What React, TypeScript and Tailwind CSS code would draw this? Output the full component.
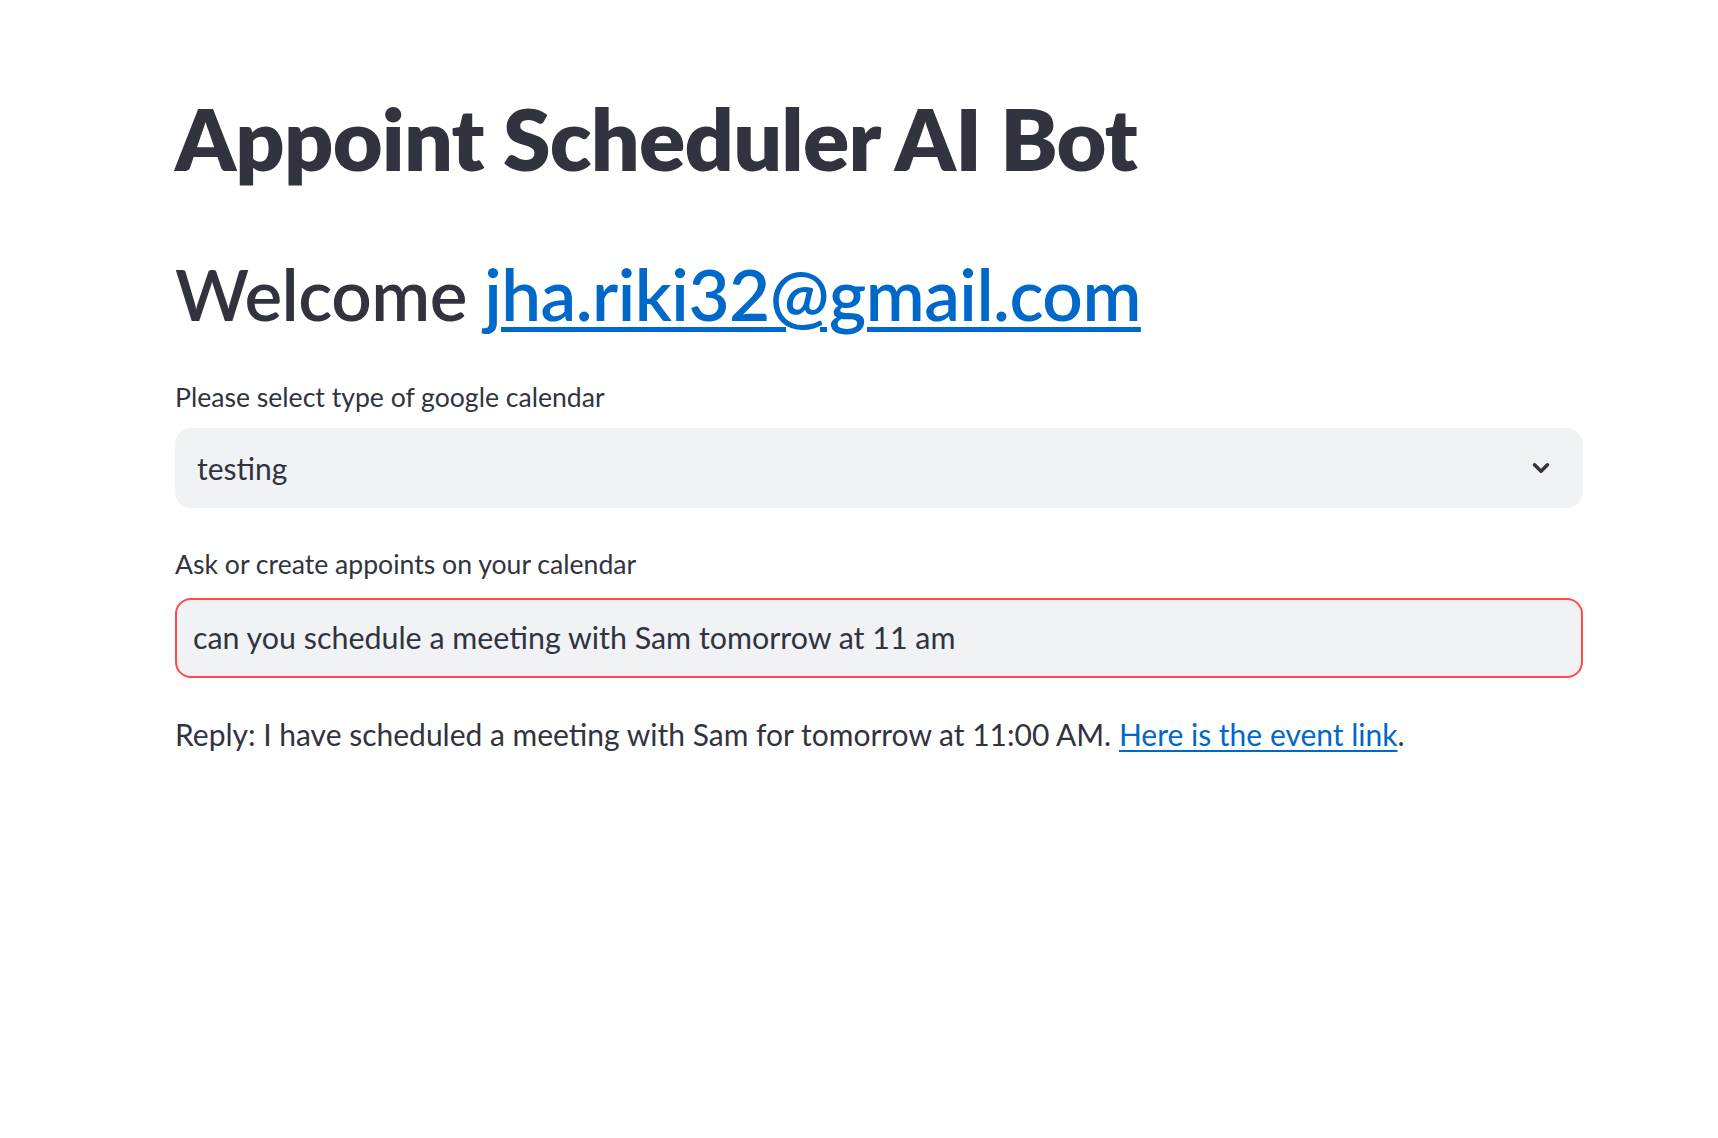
import { ChevronDown } from 'lucide-react';

export default function App() {
  return (
    <div className="min-h-screen bg-white text-[#31333f] font-['Lato','Noto_Sans',sans-serif]">
      <div className="pl-[175px] pr-[135px] pt-[86px]">
        <h1 className="text-[86px] font-extrabold leading-[1.2] tracking-[-0.8px]">Appoint Scheduler AI Bot</h1>

        <h2 className="mt-[62px] text-[71px] font-semibold leading-[1.2] tracking-[-0.5px]">
          Welcome{' '}
          <a href="#" className="text-[#0068c9] underline decoration-[5px] underline-offset-[6px]">
            jha.riki32@gmail.com
          </a>
        </h2>

        <label className="mt-[42px] block text-[26.6px] leading-[1.5]">Please select type of google calendar</label>
        <div className="mt-[10px] flex h-[80px] items-center justify-between rounded-[16px] bg-[#f0f2f6] pl-[22px] pr-[29px]">
          <span className="text-[30px]">testing</span>
          <ChevronDown className="h-[26px] w-[26px]" strokeWidth={3.2} />
        </div>

        <label className="mt-[37px] block text-[26.6px] leading-[1.5]">Ask or create appoints on your calendar</label>
        <div className="mt-[13px] flex h-[80px] items-center rounded-[16px] border-2 border-[#ff4b4b] bg-[#f0f2f6] px-[16px]">
          <span className="text-[30.4px]">can you schedule a meeting with Sam tomorrow at 11 am</span>
        </div>

        <p className="mt-[32px] text-[30px] leading-[1.6]">
          Reply: I have scheduled a meeting with Sam for tomorrow at 11:00 AM.{' '}
          <a href="#" className="text-[#0068c9] underline decoration-2 underline-offset-[4px]">
            Here is the event link
          </a>
          .
        </p>
      </div>
    </div>
  );
}
